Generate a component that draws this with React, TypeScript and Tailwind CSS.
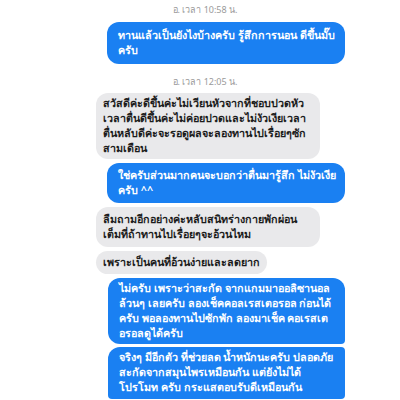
import React from 'react';

type Msg = { side: 'me' | 'them'; lines: string[]; w: string; cls?: string };

const Stamp = ({ text }: { text: string }) => (
  <div className="text-center text-[9px] leading-[12px] text-[#9a9a9a] pl-[10px]">{text}</div>
);

const Bubble = ({ side, lines, w, cls = '' }: Msg) => {
  const me = side === 'me';
  return (
    <div className={`flex ${me ? 'justify-end pr-[55px]' : 'justify-start pl-[96px]'}`}>
      <div
        className={`${w} ${cls} ${
          me ? 'bg-[#1a80f2] text-white pl-[11px]' : 'bg-[#e9e9eb] text-[#1c1c1c] pl-[7px]'
        } text-[10.75px] leading-[15px] font-semibold overflow-hidden`}
      >
        {lines.map((l, i) => (
          <div key={i} className="whitespace-nowrap">
            {l}
          </div>
        ))}
      </div>
    </div>
  );
};

export default function App() {
  return (
    <div
      className="w-[400px] h-[400px] overflow-hidden bg-white pt-[4px]"
      style={{ fontFamily: '"Noto Sans", "Liberation Sans", sans-serif' }}
    >
      <Stamp text="อ. เวลา 10:58 น." />
      <div className="mt-[6px]">
        <Bubble
          side="me"
          w="w-[238px]"
          cls="rounded-[12px] py-[6px]"
          lines={['ทานแล้วเป็นยังไงบ้างครับ รู้สึกการนอน ดีขึ้นมั๊บ', 'ครับ']}
        />
      </div>
      <div className="mt-[12px]">
        <Stamp text="อ. เวลา 12:05 น." />
      </div>
      <div className="mt-[5px] flex flex-col gap-[4px]">
        <Bubble
          side="them"
          w="w-[224px]"
          cls="rounded-[12px] py-[3px]"
          lines={[
            'สวัสดีค่ะดีขึ้นค่ะไม่เวียนหัวจากที่ชอบปวดหัว',
            'เวลาตื่นดีขึ้นค่ะไม่ค่อยปวดและไม่งัวเงียเวลา',
            'ตื่นหลับดีค่ะจะรอดูผลจะลองทานไปเรื่อยๆซัก',
            'สามเดือน',
          ]}
        />
        <Bubble
          side="me"
          w="w-[238px]"
          cls="rounded-[12px] py-[5px]"
          lines={['ใช่ครับส่วนมากคนจะบอกว่าตื่นมารู้สึก ไม่งัวเงีย', 'ครับ ^^']}
        />
        <Bubble
          side="them"
          w="w-[224px]"
          cls="rounded-[12px] py-[5px]"
          lines={['ลืมถามอีกอย่างค่ะหลับสนิทร่างกายพักผ่อน', 'เต็มที่ถ้าทานไปเรื่อยๆจะอ้วนไหม']}
        />
        <Bubble
          side="them"
          w="w-fit pr-[7px]"
          cls="rounded-[12px] py-[4px]"
          lines={['เพราะเป็นคนที่อ้วนง่ายและลดยาก']}
        />
        <div className="flex flex-col gap-[3px]">
          <Bubble
            side="me"
            w="w-[237px]"
            cls="rounded-t-[12px] rounded-bl-[12px] rounded-br-[4px] py-[3px]"
            lines={[
              'ไม่ครับ เพราะว่าสะกัด จากแกมมาออลิซานอล',
              'ล้วนๆ เลยครับ ลองเช็คคอลเรสเตอรอล ก่อนได้',
              'ครับ พอลองทานไปซักพัก ลองมาเช็ค คอเรสเต',
              'อรอลดูได้ครับ',
            ]}
          />
          <Bubble
            side="me"
            w="w-[237px]"
            cls="rounded-tl-[12px] rounded-tr-[4px] rounded-b-[4px] pt-[3px] pb-[4px]"
            lines={[
              'จริงๆ มีอีกตัว ที่ช่วยลด น้ำหนักนะครับ ปลอดภัย',
              'สะกัดจากสมุนไพรเหมือนกัน แต่ยังไม่ได้',
              'โปรโมท ครับ กระแสตอบรับดีเหมือนกัน',
            ]}
          />
        </div>
      </div>
    </div>
  );
}
